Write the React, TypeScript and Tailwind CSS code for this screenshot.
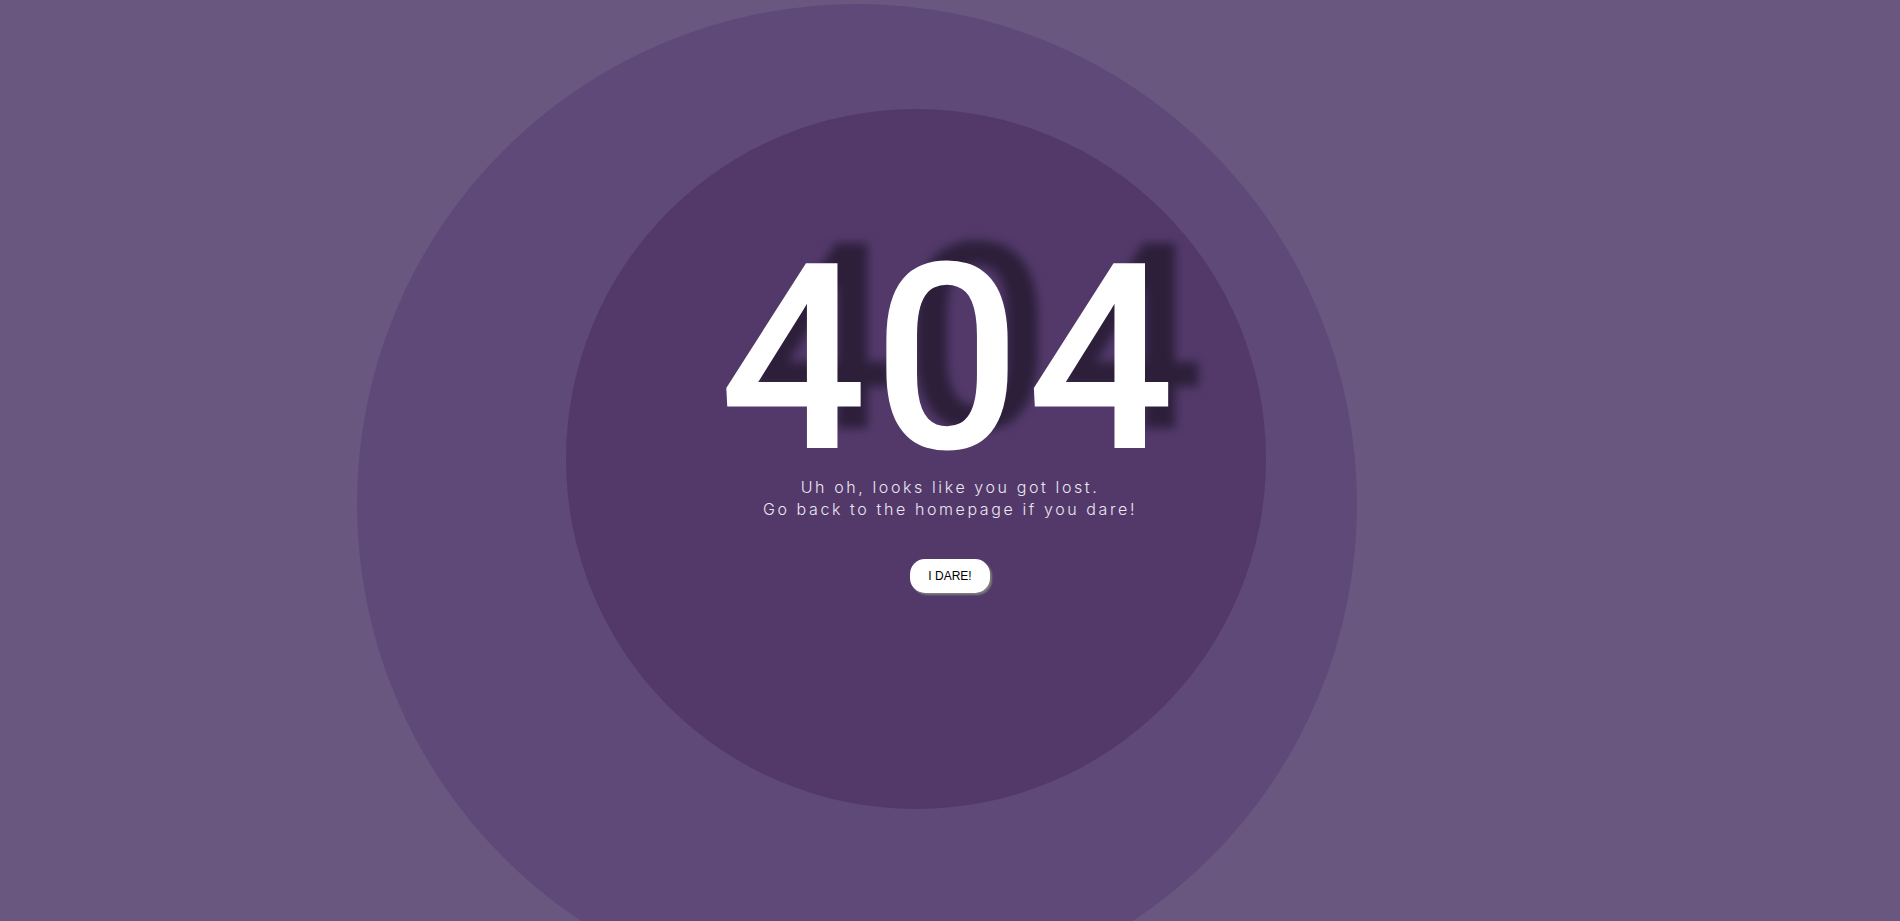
import React from 'react';

export default function App() {
  return (
    <div className="relative h-[921px] w-full overflow-hidden bg-[#695780]">
      {/* background rings */}
      <div className="absolute left-[357px] top-[4px] h-[1000px] w-[1000px] rounded-full bg-[#5f4978]" />
      <div className="absolute left-[566px] top-[109px] h-[700px] w-[700px] rounded-full bg-[#52396a]" />

      <div className="relative z-10 flex flex-col items-center pt-[244px]">
        <h1 className="font-['Roboto',sans-serif] text-[260px] font-medium leading-[230px] tracking-[6px] text-white [text-shadow:30px_-20px_10px_rgba(0,0,0,0.45)]">
          404
        </h1>
        <p className="mt-[2px] text-center font-['Inter',sans-serif] text-[16px] font-light leading-[22px] tracking-[2.6px] text-[#ece6f1]">
          Uh oh, looks like you got lost.
          <br />
          Go back to the homepage if you dare!
        </p>
        <button className="mt-[39px] h-[34px] rounded-[15px] bg-white px-[18px] font-['Liberation_Sans',Arial,sans-serif] text-[12px] text-black shadow-[2px_2px_2px_#7d7d7d]">
          I DARE!
        </button>
      </div>
    </div>
  );
}
